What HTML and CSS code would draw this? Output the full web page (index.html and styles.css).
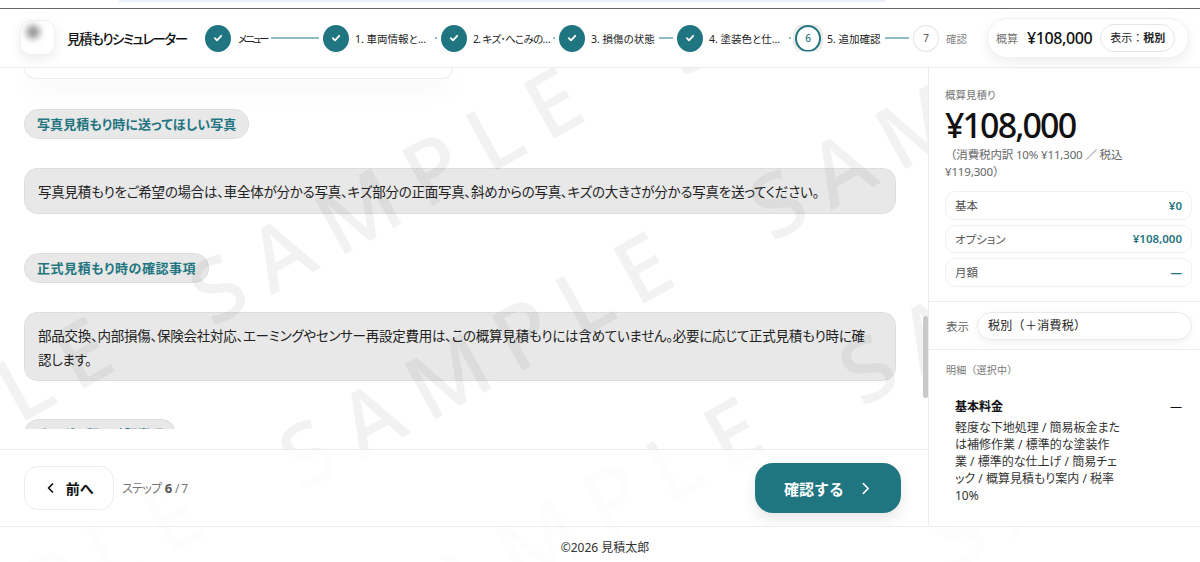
FILE: index.html
```html
<!DOCTYPE html>
<html lang="ja">
<head>
<meta charset="utf-8">
<title>見積もりシミュレーター</title>
<link rel="stylesheet" href="styles.css">
</head>
<body>
<svg class="wm" aria-hidden="true" viewBox="0 0 1200 562">
  <text transform="translate(-258 578) rotate(-29)">SAMPLE</text>
  <text transform="translate(-168 743) rotate(-29)">SAMPLE</text>
  <text transform="translate(212 328) rotate(-29)">SAMPLE</text>
  <text transform="translate(302 493) rotate(-29)">SAMPLE</text>
  <text transform="translate(392 658) rotate(-29)">SAMPLE</text>
  <text transform="translate(682 78) rotate(-29)">SAMPLE</text>
  <text transform="translate(772 243) rotate(-29)">SAMPLE</text>
  <text transform="translate(862 408) rotate(-29)">SAMPLE</text>
  <text transform="translate(952 573) rotate(-29)">SAMPLE</text>
</svg>
<div class="strip"><div class="strip-bar"></div></div>
<header class="header">
  <div class="logo"><div class="logo-blur"></div></div>
  <div class="brand">見積もりシミュレーター</div>
  <ol class="steps">
    <li class="step"><span class="dot done"><svg viewBox="0 0 12 12"><path d="M2.8 6.2l2.2 2.2 4.2-4.6"/></svg></span><span class="lbl menu">メニュー</span><span class="line"></span></li>
    <li class="step"><span class="dot done"><svg viewBox="0 0 12 12"><path d="M2.8 6.2l2.2 2.2 4.2-4.6"/></svg></span><span class="lbl">1. 車両情報と…</span><span class="line tiny"></span></li>
    <li class="step"><span class="dot done"><svg viewBox="0 0 12 12"><path d="M2.8 6.2l2.2 2.2 4.2-4.6"/></svg></span><span class="lbl tight">2. キズ･へこみの…</span><span class="line tiny"></span></li>
    <li class="step"><span class="dot done"><svg viewBox="0 0 12 12"><path d="M2.8 6.2l2.2 2.2 4.2-4.6"/></svg></span><span class="lbl">3. 損傷の状態</span><span class="line"></span></li>
    <li class="step"><span class="dot done"><svg viewBox="0 0 12 12"><path d="M2.8 6.2l2.2 2.2 4.2-4.6"/></svg></span><span class="lbl">4. 塗装色と仕…</span><span class="line tiny"></span></li>
    <li class="step"><span class="dot current">6</span><span class="lbl">5. 追加確認</span><span class="line"></span></li>
    <li class="step last"><span class="dot todo">7</span><span class="lbl muted">確認</span></li>
  </ol>
  <div class="head-pill">
    <span class="hp-label">概算</span>
    <span class="hp-price">¥108,000</span>
    <span class="hp-tax">表示：<b>税別</b></span>
  </div>
</header>
<div class="main">
  <section class="col">
    <div class="scroll">
      <div class="prev-card"></div>
      <div class="tag t1">写真見積もり時に送ってほしい写真</div>
      <div class="note n1">写真見積もりをご希望の場合は、車全体が分かる写真、キズ部分の正面写真、斜めからの写真、キズの大きさが分かる写真を送ってください。</div>
      <div class="tag t2">正式見積もり時の確認事項</div>
      <div class="note n2">部品交換、内部損傷、保険会社対応、エーミングやセンサー再設定費用は、この概算見積もりには含めていません。必要に応じて正式見積もり時に確認します。</div>
      <div class="tag t3">オーダー類の確認事項</div>
      <div class="thumb"></div>
    </div>
    <div class="nav">
      <button class="back"><svg viewBox="0 0 12 12"><path d="M7.5 2L3.5 6l4 4"/></svg><span>前へ</span></button>
      <div class="count">ステップ <b>6</b> / 7</div>
      <button class="next"><span>確認する</span><svg viewBox="0 0 12 12"><path d="M4 1.5L8.5 6 4 10.5"/></svg></button>
    </div>
  </section>
  <aside class="side">
    <div class="sum">
      <div class="sum-label">概算見積り</div>
      <div class="sum-price">¥108,000</div>
      <div class="sum-tax">（消費税内訳 10% ¥11,300 ／ 税込<br>¥119,300）</div>
      <div class="rows">
        <div class="row"><span>基本</span><b>¥0</b></div>
        <div class="row"><span>オプション</span><b>¥108,000</b></div>
        <div class="row"><span>月額</span><b>—</b></div>
      </div>
    </div>
    <div class="disp">
      <span>表示</span>
      <div class="select">税別（＋消費税）</div>
    </div>
    <div class="detail">
      <div class="det-label">明細（選択中）</div>
      <div class="det-item">
        <div class="det-text">
          <div class="det-title">基本料金</div>
          <div class="det-desc">軽度な下地処理 / 簡易板金または補修作業 / 標準的な塗装作業 / 標準的な仕上げ / 簡易チェック / 概算見積もり案内 / 税率10%</div>
        </div>
        <div class="det-val">—</div>
      </div>
    </div>
  </aside>
</div>
<footer class="foot">©2026 見積太郎</footer>
</body>
</html>
```
FILE: styles.css
```css
* { box-sizing: border-box; }
html, body { margin: 0; height: 562px; overflow: hidden; background: #fff; }
body {
  position: relative;
  display: flex;
  flex-direction: column;
  font-family: "Noto Sans", "Noto Sans CJK JP", sans-serif;
  font-feature-settings: "palt";
  color: #111;
}
.wm { position: absolute; left: 0; top: 0; width: 1200px; height: 562px; pointer-events: none; }
.wm text { font: 500 88px "Noto Sans", sans-serif; letter-spacing: 19px; fill: #f2f2f3; }

.strip { height: 9px; flex: none; border-bottom: 1px solid #6a6a6a; padding-left: 119px; position: relative; background: #fff; }
.strip-bar { width: 766px; height: 2px; background: #eaf1fa; }

.header {
  height: 59px; flex: none;
  display: flex; align-items: center;
  padding: 0 12px 0 20px;
  border-bottom: 1px solid #ececec;
  background: #fff;
  position: relative; z-index: 2;
}
.logo {
  width: 35px; height: 35px; border-radius: 10px; background: #fff;
  border: 1px solid #f0f0f0;
  box-shadow: 0 4px 12px rgba(0,0,0,.08);
  overflow: hidden; flex: none;
  margin-top: -1px;
}
.logo-blur { width: 14px; height: 14px; margin: 4px 0 0 5px; border-radius: 50%; background: #999; filter: blur(3px); }
.brand { width: 150px; padding-left: 12px; flex: none; font-size: 13.5px; font-weight: 500; letter-spacing: -1.5px; white-space: nowrap; }
.steps { list-style: none; margin: 0; padding: 0; display: flex; align-items: center; flex: none; }
.step { width: 118px; display: flex; align-items: center; flex: none; }
.step.last { width: 75px; }
.dot {
  width: 26px; height: 27px; border-radius: 50%; flex: none;
  display: flex; align-items: center; justify-content: center;
  font-size: 10px; font-weight: 500;
}
.dot svg { width: 12px; height: 12px; fill: none; stroke: #fff; stroke-width: 1.8; stroke-linecap: round; stroke-linejoin: round; }
.done { background: #1f7580; }
.current { border: 2px solid #1f7580; color: #1f7580; background: #fff; box-shadow: 0 0 0 3px #ececec; clip-path: inset(0 -2px); }
.todo { border: 1px solid #e4e4e4; color: #666; background: #fff; }
.lbl { font-size: 10.5px; margin-left: 6px; white-space: nowrap; color: #222; }
.lbl.menu { letter-spacing: -2.2px; margin-left: 7px; }
.lbl.tight { letter-spacing: -.7px; }
.lbl.muted { color: #888; margin-left: 7px; }
.line { flex: 1; height: 2px; background: #8fbcc2; margin: 0 4px; min-width: 1px; }
.line.tiny { flex: none; width: 2px; margin: 0 4px 0 auto; }

.head-pill {
  width: 202px; height: 40px; flex: none; margin-left: -1px;
  display: flex; align-items: center;
  padding-left: 8px;
  border: 1px solid #f0f0f0; border-radius: 20px;
  box-shadow: 0 4px 12px rgba(0,0,0,.07);
  background: #fff;
}
.hp-label { font-size: 11px; color: #777; }
.hp-price { font-size: 16px; font-weight: 500; margin-left: 9px; letter-spacing: -.4px; }
.hp-tax { font-size: 11px; border: 1px solid #e6e6e6; border-radius: 15px; height: 28px; line-height: 26px; padding: 0 9px; margin-left: 8px; color: #222; white-space: nowrap; font-feature-settings: normal; }
.hp-tax b { font-weight: 700; }

.main { flex: 1; min-height: 0; display: flex; position: relative; }
.col { flex: none; width: 928px; display: flex; flex-direction: column; min-height: 0; }
.scroll {
  height: 361px; flex: none; overflow: hidden;
  position: relative;
  padding: 0 32px 0 24px;
}
.prev-card {
  width: 429px; height: 11px; background: #fff;
  border: 1px solid #eee; border-top: 0;
  border-radius: 0 0 16px 16px;
  box-shadow: 0 10px 24px rgba(0,0,0,.05);
  margin-bottom: 30px;
}
.tag {
  width: max-content; height: 30px; line-height: 28px;
  padding: 0 12px; border-radius: 15px;
  background: rgba(0,0,0,.09); border: 1px solid rgba(0,0,0,.05);
  color: #1f7580; font-size: 13px; font-weight: 700;
}
.t1 { letter-spacing: .1px; }
.t2 { letter-spacing: .55px; }
.t3 { letter-spacing: -.2px; }
.note {
  margin: 29px 0 39px;
  background: rgba(0,0,0,.09); border: 1px dotted rgba(0,0,0,.1); border-radius: 14px;
  padding: 11px 20px 11px 13px; font-size: 13.5px; line-height: 24px; letter-spacing: -.25px; color: #222;
}
.n1 { height: 46px; }
.n2 { height: 69px; margin-bottom: 38px; }
.thumb { position: absolute; right: 0; top: 248px; width: 5px; height: 82px; background: #c9c9c9; border-radius: 3px; }

.nav {
  flex: 1; display: flex; align-items: center;
  padding: 0 27px 0 24px;
  border-top: 1px solid #ececec;
  margin-top: 20px;
  background: rgba(255,255,255,.8);
}
.back {
  width: 90px; height: 44px; border-radius: 14px; background: #fff;
  border: 1px solid #ececec;
  display: flex; align-items: center; justify-content: center; gap: 9px;
  font: 700 14px "Noto Sans", "Noto Sans CJK JP", sans-serif; color: #111;
  font-feature-settings: "palt";
}
.back svg { width: 12px; height: 12px; fill: none; stroke: #111; stroke-width: 1.7; stroke-linecap: round; stroke-linejoin: round; }
.count { margin-left: 8px; font-size: 12px; color: #777; letter-spacing: -.7px; }
.count b { font-size: 13px; color: #555; font-weight: 700; margin: 0 1px; }
.next {
  margin-left: auto; width: 146px; height: 50px; border: 0; border-radius: 18px;
  background: #1f7580; color: #fff;
  display: flex; align-items: center; justify-content: center; gap: 15px;
  font: 700 15px "Noto Sans", "Noto Sans CJK JP", sans-serif;
  box-shadow: 0 6px 14px rgba(0,0,0,.1);
}
.next svg { width: 13px; height: 13px; fill: none; stroke: #fff; stroke-width: 1.4; stroke-linecap: round; stroke-linejoin: round; }

.side { width: 272px; flex: none; border-left: 1px solid #ececec; background: rgba(255,255,255,.95); display: flex; flex-direction: column; }
.sum { padding: 19px 8px 14px 16px; border-bottom: 1px solid #ececec; height: 234px; }
.sum-label { font-size: 10.5px; color: #777; line-height: 16px; }
.sum-price { font-size: 34px; font-weight: 500; line-height: 44px; letter-spacing: -1.9px; }
.sum-tax { font-size: 11.5px; color: #666; line-height: 16.5px; font-feature-settings: normal; letter-spacing: -.15px; }
.rows { margin-top: 11px; display: flex; flex-direction: column; gap: 5px; }
.row {
  height: 28.5px; display: flex; align-items: center; justify-content: space-between;
  padding: 0 9px; border: 1px solid #f1f1f1; border-radius: 10px;
  font-size: 11.5px; color: #555;
}
.row b { color: #1f7580; font-weight: 600; font-size: 11.5px; }
.disp { height: 48px; flex: none; display: flex; align-items: center; padding: 0 8px 0 17px; border-bottom: 1px solid #ececec; font-size: 11.5px; color: #666; }
.select {
  margin-left: 8px; flex: 1; height: 28px; line-height: 26px; padding: 0 10px;
  border: 1px solid #e8e8e8; border-radius: 14px; font-size: 12px; letter-spacing: .3px; color: #222; font-feature-settings: normal;
  box-shadow: 0 3px 8px rgba(0,0,0,.05);
}
.detail { padding: 12px 18px 0 17px; }
.det-label { font-size: 10px; color: #777; line-height: 16px; letter-spacing: .2px; font-feature-settings: normal; }
.det-item { display: flex; justify-content: space-between; padding: 21px 0 0 9px; }
.det-text { width: 165.5px; }
.det-title { font-size: 12px; font-weight: 700; line-height: 16px; }
.det-desc { font-size: 12px; line-height: 17px; color: #333; margin-top: 4px; }
.det-val { font-size: 12px; line-height: 16px; }

.foot { height: 36px; flex: none; border-top: 1px solid #ececec; text-align: center; line-height: 42px; font-size: 12px; color: #333; padding-left: 10px; background: rgba(255,255,255,.85); position: relative; }
```
